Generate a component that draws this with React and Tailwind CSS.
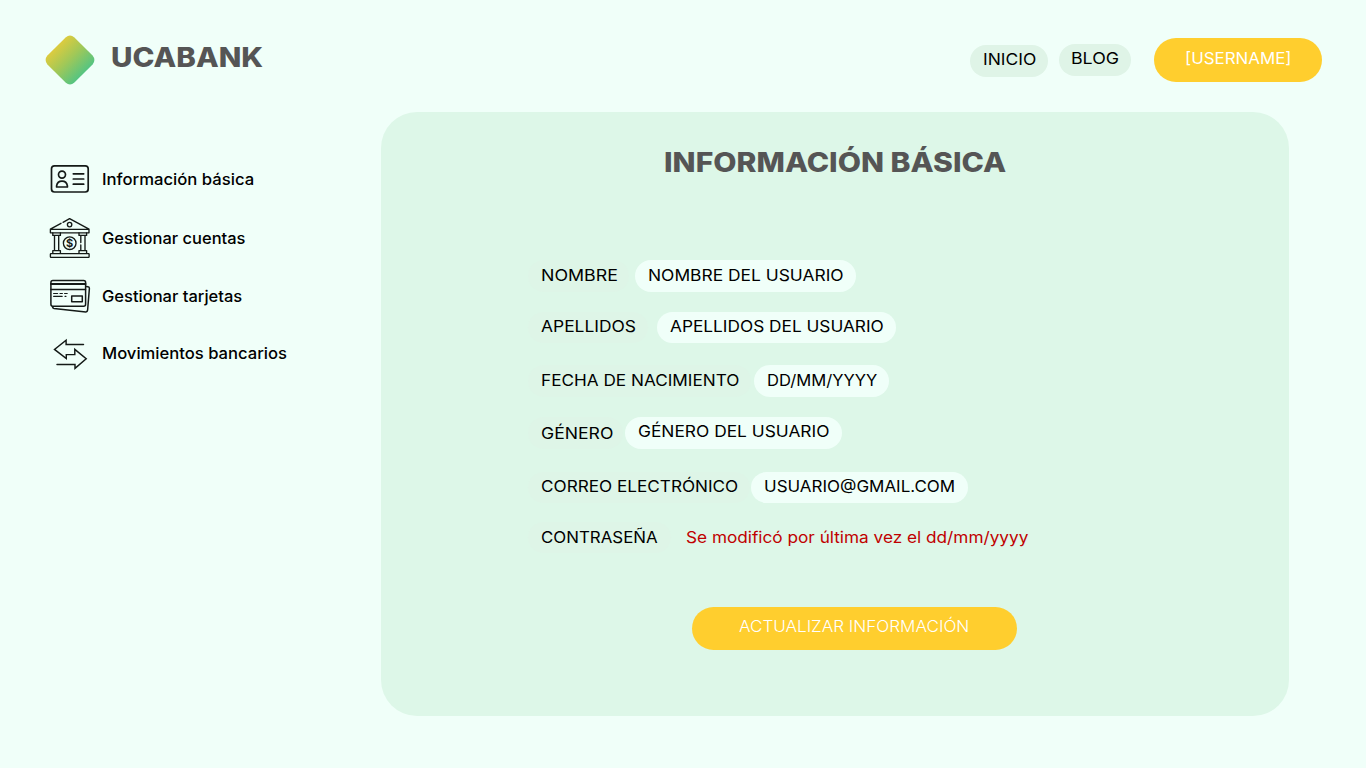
function Stretch({ className, children }) {
  return <span className={`inline-block origin-left whitespace-nowrap ${className}`}>{children}</span>;
}

function Logo() {
  return (
    <svg width="50" height="50" viewBox="45 35 50 50" className="shrink-0">
      <defs>
        <linearGradient id="logo" gradientUnits="userSpaceOnUse" x1="54" y1="44" x2="85" y2="75">
          <stop offset="0" stopColor="#e8cc3a" />
          <stop offset="0.5" stopColor="#a0c858" />
          <stop offset="1" stopColor="#4dc486" />
        </linearGradient>
      </defs>
      <path
        fill="url(#logo)"
        d="M65.6 37.4 Q70 33.6 74.4 37.4 L92.6 55.6 Q96.2 60 92.6 64.4 L74.4 82.6 Q70 86.4 65.6 82.6 L47.4 64.4 Q43.8 60 47.4 55.6 Z"
      />
    </svg>
  );
}

const iconProps = { fill: 'none', stroke: '#141a17', strokeLinejoin: 'round', strokeLinecap: 'round' };

function IdIcon() {
  return (
    <svg width="44" height="36" viewBox="48 161 44 36" strokeWidth="1.7" {...iconProps}>
      <rect x="51.5" y="165.8" width="36.7" height="26.2" rx="3" />
      <circle cx="62" cy="174.6" r="3.5" />
      <path d="M56.6 187 v-1.2 q.8 -4.6 5.4 -4.6 t5.4 4.6 v1.2 z M73.3 173.8 h10.4 M73.3 179 h10.4 M73.3 184.2 h10.4" />
    </svg>
  );
}

function BankIcon() {
  return (
    <svg width="44" height="44" viewBox="48 216 44 44" strokeWidth="1.35" {...iconProps}>
      <path d="M61 223.3 L50.4 229.2 v3.6 h38.6 v-3.6 L69.6 218.7 L63 222.3 M50.4 229.3 h38.6" />
      <circle cx="69.6" cy="224.6" r="2.2" />
      <path d="M52.8 232.8 v2.6 h7.6 v-2.6 M79 232.8 v2.6 h7.6 v-2.6" />
      <path d="M54.5 235.6 v14.8 M58.7 235.6 v14.8 M80.8 235.6 v7 M80.8 245 v5.4 M85 235.6 v14.8" />
      <path d="M52.8 253.4 v-2.8 h7.6 v2.8 M79 253.4 v-2.8 h7.6 v2.8" />
      <rect x="50.4" y="253.6" width="38.7" height="3.8" rx="0.6" />
      <circle cx="69.7" cy="243.2" r="6.3" />
      <text x="69.7" y="247.2" textAnchor="middle" fontFamily="Inter, sans-serif" fontSize="11" fontWeight="700" fill="#141a17" stroke="none">$</text>
    </svg>
  );
}

function CardIcon() {
  return (
    <svg width="44" height="40" viewBox="48 276 44 40" strokeWidth="1.5" {...iconProps}>
      <rect x="50.9" y="280.6" width="34.7" height="25.6" rx="2" />
      <path d="M51 284 h34.5" strokeWidth="2" />
      <path d="M51 289.4 h34.5" />
      <path d="M53.6 293.5 h4 M60 293.5 h2.4 M64.6 293.5 h2.6 M53.6 296.3 h8.6 M65 296.3 h1" strokeWidth="1.2" />
      <rect x="71.7" y="296" width="10.6" height="5.8" />
      <path d="M86 286.4 l2 .3 q1.5 .2 1.4 1.7 l-1.8 21.8 q-.2 1.8 -1.8 1.7 L54 308.5 q-1.3 -.2 -1.6 -1.8" />
    </svg>
  );
}

function ArrowsIcon() {
  return (
    <svg width="44" height="36" viewBox="48 336 44 36" strokeWidth="1.45" {...iconProps} strokeLinejoin="miter">
      <path d="M83.5 344.4 H66.1 V340.2 L54.5 349.4 L66.3 358.6 V354.6 H74.8 V349.4 L86.2 358.8 L75 368.4 V364.4 H57" />
    </svg>
  );
}

const menu = [
  { label: 'Información básica', Icon: IdIcon, row: 'h-[36px]', text: 'mt-[8px] scale-x-[1.042]' },
  { label: 'Gestionar cuentas', Icon: BankIcon, row: 'h-[44px] mt-[19px]', text: 'mt-[12px] scale-x-[1.029]' },
  { label: 'Gestionar tarjetas', Icon: CardIcon, row: 'h-[40px] mt-[16px]', text: 'mt-[10px] scale-x-[1.031]' },
  { label: 'Movimientos bancarios', Icon: ArrowsIcon, row: 'h-[36px] mt-[20px]', text: 'mt-[7px] scale-x-[1.038]' },
];

const fields = [
  { label: 'NOMBRE', box: 'w-[101px]', ls: 'scale-x-[1.112]', value: 'NOMBRE DEL USUARIO', pill: 'w-[221px] ml-[6px] pl-[13px]', vs: 'scale-x-[1.087]', row: '', lp: 'pt-[5px]', vp: 'pt-[5px]' },
  { label: 'APELLIDOS', box: 'w-[120px]', ls: 'scale-x-[1.088]', value: 'APELLIDOS DEL USUARIO', pill: 'w-[239.5px] ml-[8.5px] pl-[13.2px]', vs: 'scale-x-[1.079]', row: 'mt-[20px]', lp: 'pt-[4.5px]', vp: 'pt-[4.5px]' },
  { label: 'FECHA DE NACIMIENTO', box: 'w-[223px]', ls: 'scale-x-[1.073]', value: 'DD/MM/YYYY', pill: 'w-[135.5px] ml-[2.5px] pl-[13.5px]', vs: 'scale-x-[1.036]', row: 'mt-[22px]', lp: 'pt-[5px]', vp: 'pt-[5px]' },
  { label: 'GÉNERO', box: 'w-[95px]', ls: 'scale-x-[1.1]', value: 'GÉNERO DEL USUARIO', pill: 'w-[217px] ml-[2px] pl-[13px]', vs: 'scale-x-[1.084]', row: 'mt-[20.5px]', lp: 'pt-[6px]', vp: 'pt-[4px]' },
  { label: 'CORREO ELECTRÓNICO', box: 'w-[222px]', ls: 'scale-x-[1.072]', value: 'USUARIO@GMAIL.COM', pill: 'w-[217px] ml-[1px] pl-[13px]', vs: 'scale-x-[1.061]', row: 'mt-[23px]', lp: 'pt-[4px]', vp: 'pt-[4px]' },
];

export default function App() {
  return (
    <div className="flex h-[768px] w-[1366px] flex-col overflow-hidden bg-[#f0fff9] font-[Inter,sans-serif] text-[16px] leading-[20px] text-black">
      <header className="flex h-[112px] shrink-0 items-start pl-[45px] pr-[44px]">
        <div className="flex flex-1 items-start pt-[35px]">
          <Logo />
          <h1 className="ml-[16px] mt-[7px] text-[27px] font-extrabold leading-[32px] text-[#555555]">
            <Stretch className="scale-x-[1.095]">UCABANK</Stretch>
          </h1>
        </div>
        <nav className="flex items-start">
          <a className="mt-[44.5px] h-[32px] w-[78px] rounded-full bg-[#dff4e7] pl-[12.8px] pt-[4.5px]">
            <Stretch className="scale-x-[1.09]">INICIO</Stretch>
          </a>
          <a className="ml-[11px] mt-[44px] h-[31.5px] w-[72px] rounded-full bg-[#dff4e7] pl-[12.3px] pt-[4px]">
            <Stretch className="scale-x-[1.11]">BLOG</Stretch>
          </a>
          <a className="ml-[23px] mt-[38px] h-[43.5px] w-[168px] rounded-[22px] bg-[#ffce2e] pl-[31px] pt-[10px] text-white">
            <Stretch className="scale-x-[1.055]">[USERNAME]</Stretch>
          </a>
        </nav>
      </header>
      <main className="flex items-start">
        <aside className="flex w-[381px] shrink-0 flex-col pl-[48px] pt-[49px]">
          {menu.map(({ label, Icon, row, text }) => (
            <a key={label} className={`flex items-start font-medium ${row}`}>
              <Icon />
              <Stretch className={`ml-[10px] ${text}`}>{label}</Stretch>
            </a>
          ))}
        </aside>
        <section className="flex h-[604px] w-[907.5px] flex-col rounded-[36px] bg-[#ddf7e8] pl-[147px]">
          <h2 className="ml-[136.3px] mt-[35px] text-[27px] font-extrabold leading-[32px] text-[#555555]">
            <Stretch className="scale-x-[1.115]">INFORMACIÓN BÁSICA</Stretch>
          </h2>
          <div className="mt-[81px] flex flex-col">
            {fields.map((f) => (
              <div key={f.label} className={`flex h-[31.5px] ${f.row}`}>
                <div className={`rounded-full bg-[#def5e7] pl-[12.9px] ${f.box} ${f.lp}`}>
                  <Stretch className={f.ls}>{f.label}</Stretch>
                </div>
                <div className={`rounded-full bg-[#f0fff9] ${f.pill} ${f.vp}`}>
                  <Stretch className={f.vs}>{f.value}</Stretch>
                </div>
              </div>
            ))}
            <div className="mt-[18.5px] flex h-[31.5px]">
              <div className="w-[143px] rounded-full bg-[#def5e7] pl-[12.9px] pt-[5px]">
                <Stretch className="scale-x-[1.055]">CONTRASEÑA</Stretch>
              </div>
              <div className="ml-[15px] pt-[5px] text-[#c00000]">
                <Stretch className="scale-x-[1.075]">Se modificó por última vez el dd/mm/yyyy</Stretch>
              </div>
            </div>
          </div>
          <button className="ml-[164px] mt-[53.5px] flex h-[43.5px] w-[324.5px] items-start rounded-[22px] bg-[#ffce2e] pl-[46.5px] pt-[9.5px] text-left font-light text-white">
            <Stretch className="scale-x-[1.067]">ACTUALIZAR INFORMACIÓN</Stretch>
          </button>
        </section>
      </main>
    </div>
  );
}
